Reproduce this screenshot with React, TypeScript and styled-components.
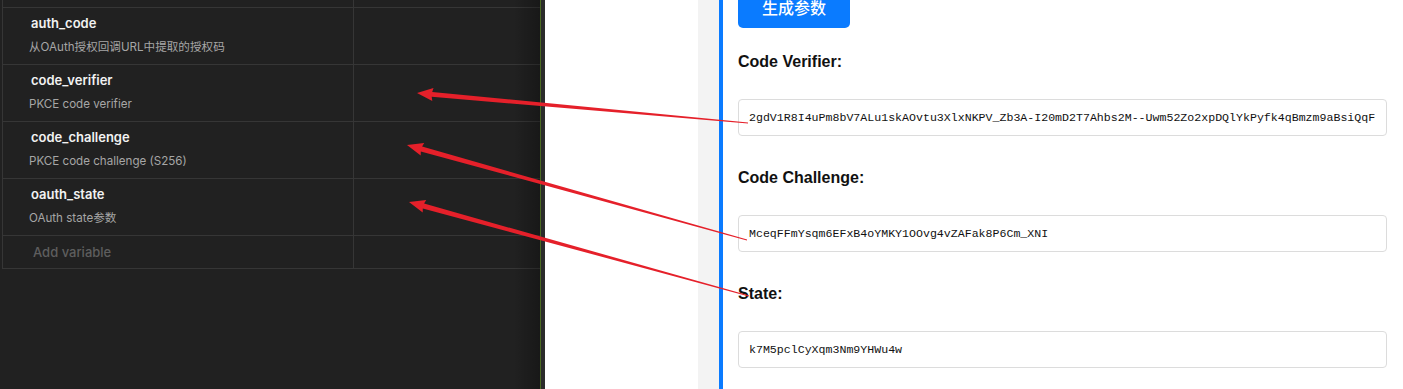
import React from "react";
import styled, { createGlobalStyle } from "styled-components";

const GlobalStyle = createGlobalStyle`
  html, body { margin: 0; padding: 0; background: #ffffff; overflow: hidden; }
  #root { width: 1403px; height: 389px; }
`;

const Page = styled.div`
  position: relative;
  display: flex;
  width: 1403px;
  height: 389px;
  overflow: hidden;
  font-family: "Liberation Sans", Arial, sans-serif;
`;

const DarkPanel = styled.div`
  position: relative;
  flex: 0 0 540px;
  background: #212121;
  overflow: hidden;
  padding-left: 2px;
  box-sizing: border-box;
  &::after {
    content: "";
    position: absolute;
    top: 0;
    right: 0;
    bottom: 0;
    width: 26px;
    background: linear-gradient(to right, rgba(0, 0, 0, 0), rgba(0, 0, 0, 0.28));
    pointer-events: none;
  }
`;

const VarTable = styled.div`
  width: 720px;
  margin-top: -50px;
  border-left: 1px solid #363636;
  border-bottom: 1px solid #363636;
  font-family: Inter, "Noto Sans", "Noto Sans CJK SC", sans-serif;
`;

const VarRow = styled.div<{ $compact?: boolean }>`
  display: grid;
  grid-template-columns: 351px 1fr;
  box-sizing: border-box;
  height: ${(p) => (p.$compact ? "33px" : "57px")};
  border-top: 1px solid #363636;
`;

const NameCell = styled.div<{ $compact?: boolean }>`
  display: flex;
  flex-direction: column;
  justify-content: ${(p) => (p.$compact ? "center" : "flex-start")};
  padding: ${(p) => (p.$compact ? "0 0 0 28px" : "6px 0 0 26px")};
  border-right: 1px solid #363636;
  box-sizing: border-box;
`;

const ValueCell = styled.div``;

const VarName = styled.div`
  padding-left: 2px;
  font-size: 13px;
  line-height: 18px;
  font-weight: 600;
  color: #f2f2f2;
`;

const VarDesc = styled.div`
  margin-top: 6px;
  font-size: 11.6px;
  line-height: 18px;
  color: #a6a6a6;
  font-family: Inter, "Noto Sans CJK SC", sans-serif;
`;

const AddVar = styled.div`
  padding-left: 2px;
  font-size: 13px;
  line-height: 18px;
  font-weight: 500;
  color: #5e5e5e;
`;

const Splitter = styled.div`
  flex: 0 0 4px;
  border-left: 1px solid #4b6a22;
  background: #2b2b2b;
`;

const BlankPane = styled.div`
  flex: 0 0 153px;
  background: #ffffff;
`;

const Gutter = styled.div`
  flex: 0 0 21px;
  background: #f3f3f3;
`;

const Card = styled.div`
  flex: 1;
  display: flex;
  flex-direction: column;
  align-items: flex-start;
  border-left: 4px solid #0a7bff;
  padding: 0 16px 0 15px;
  background: #ffffff;
`;

const GenerateButton = styled.button`
  margin-top: -14px;
  padding: 10px 24px;
  border: none;
  border-radius: 5px;
  background: #0a7bff;
  color: #ffffff;
  font-family: "Noto Sans CJK SC", sans-serif;
  font-size: 16px;
  font-weight: 500;
  line-height: 22px;
`;

const Field = styled.div`
  display: flex;
  flex-direction: column;
  align-self: stretch;
`;

const FieldLabel = styled.div<{ $first?: boolean }>`
  margin-top: ${(p) => (p.$first ? "25px" : "33px")};
  font-family: "Liberation Sans", Arial, sans-serif;
  font-size: 16px;
  line-height: 18px;
  font-weight: 700;
  color: #111111;
`;

const ValueBox = styled.div`
  margin-top: 28px;
  height: 37px;
  box-sizing: border-box;
  border: 1px solid #dcdcdc;
  border-radius: 4px;
  padding: 0 10px;
  font-family: "Liberation Mono", "Courier New", monospace;
  font-size: 11.6px;
  line-height: 35px;
  color: #111111;
  white-space: nowrap;
  overflow: hidden;
`;

const ArrowLayer = styled.svg`
  position: absolute;
  top: 0;
  left: 0;
  width: 1403px;
  height: 389px;
  pointer-events: none;
`;

type Pt = [number, number];

const arrowPoints = (tip: Pt, tail: Pt): string => {
  const dx = tail[0] - tip[0];
  const dy = tail[1] - tip[1];
  const len = Math.hypot(dx, dy);
  const ux = dx / len;
  const uy = dy / len;
  const nx = -uy;
  const ny = ux;
  const headLen = 16;
  const bx = tip[0] + ux * headLen;
  const by = tip[1] + uy * headLen;
  const hw = 6.5;
  const sw0 = 2.5;
  const sw1 = 0.5;
  const pts: Pt[] = [
    tip,
    [bx + nx * hw, by + ny * hw],
    [bx - ux + nx * sw0, by - uy + ny * sw0],
    [tail[0] + nx * sw1, tail[1] + ny * sw1],
    [tail[0] - nx * sw1, tail[1] - ny * sw1],
    [bx - ux - nx * sw0, by - uy - ny * sw0],
    [bx - nx * hw, by - ny * hw],
  ];
  return pts.map((p) => `${p[0].toFixed(1)},${p[1].toFixed(1)}`).join(" ");
};

const arrows: { tip: Pt; tail: Pt }[] = [
  { tip: [417, 93], tail: [748, 123] },
  { tip: [407, 145], tail: [747, 240] },
  { tip: [409, 202], tail: [749, 296] },
];

const variables = [
  { name: "", desc: "" },
  { name: "auth_code", desc: "从OAuth授权回调URL中提取的授权码" },
  { name: "code_verifier", desc: "PKCE code verifier" },
  { name: "code_challenge", desc: "PKCE code challenge (S256)" },
  { name: "oauth_state", desc: "OAuth state参数" },
];

const fields = [
  {
    label: "Code Verifier:",
    value:
      "2gdV1R8I4uPm8bV7ALu1skAOvtu3XlxNKPV_Zb3A-I20mD2T7Ahbs2M--Uwm52Zo2xpDQlYkPyfk4qBmzm9aBsiQqF",
  },
  { label: "Code Challenge:", value: "MceqFFmYsqm6EFxB4oYMKY1OOvg4vZAFak8P6Cm_XNI" },
  { label: "State:", value: "k7M5pclCyXqm3Nm9YHWu4w" },
];

export default function App() {
  return (
    <>
      <GlobalStyle />
      <Page>
        <DarkPanel>
          <VarTable>
            {variables.map((v, i) => (
              <VarRow key={i}>
                <NameCell>
                  <VarName>{v.name}</VarName>
                  <VarDesc>{v.desc}</VarDesc>
                </NameCell>
                <ValueCell />
              </VarRow>
            ))}
            <VarRow $compact>
              <NameCell $compact>
                <AddVar>Add variable</AddVar>
              </NameCell>
              <ValueCell />
            </VarRow>
          </VarTable>
        </DarkPanel>
        <Splitter />
        <BlankPane />
        <Gutter />
        <Card>
          <GenerateButton>生成参数</GenerateButton>
          {fields.map((f, i) => (
            <Field key={f.label}>
              <FieldLabel $first={i === 0}>{f.label}</FieldLabel>
              <ValueBox>{f.value}</ValueBox>
            </Field>
          ))}
        </Card>
        <ArrowLayer viewBox="0 0 1403 389">
          {arrows.map((a, i) => (
            <polygon key={i} points={arrowPoints(a.tip, a.tail)} fill="#e5202a" />
          ))}
        </ArrowLayer>
      </Page>
    </>
  );
}
